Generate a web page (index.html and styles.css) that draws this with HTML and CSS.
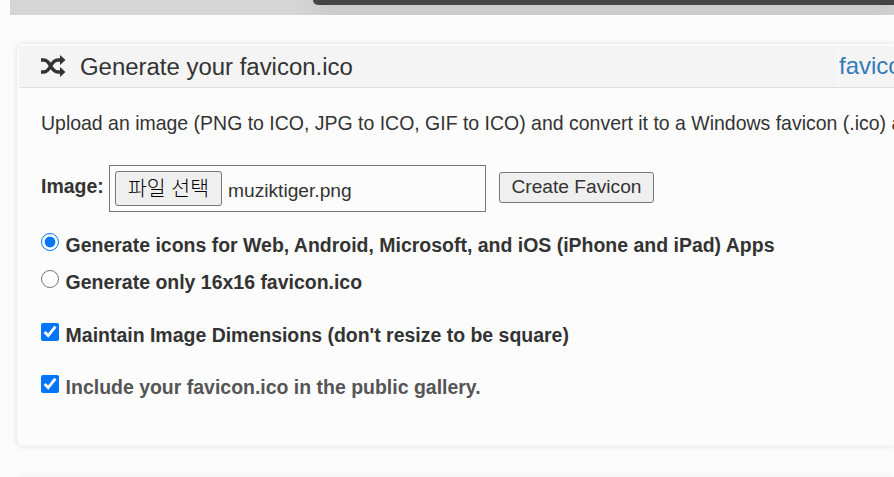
FILE: index.html
```html
<!DOCTYPE html>
<html lang="en">
<head>
<meta charset="utf-8">
<title>Favicon Generator</title>
<link rel="stylesheet" href="styles.css">
</head>
<body>
<div class="banner"><div class="banner-panel"></div></div>
<main class="panel">
  <header class="panel-head">
    <svg class="shuffle" viewBox="0 0 25 22" aria-hidden="true">
      <path d="M0 5H3C10 5 9 17 17 17H19M0 17H3C10 17 9 5 17 5H19" fill="none" stroke="#333" stroke-width="3.4"/>
      <path d="M19 0L24.5 5L19 10ZM19 12L24.5 17L19 22Z" fill="#333"/>
    </svg>
    <h1>Generate your favicon.ico</h1>
    <a class="head-link">favicon.ico</a>
  </header>
  <form class="panel-body">
    <p class="intro">Upload an image (PNG to ICO, JPG to ICO, GIF to ICO) and convert it to a Windows favicon (.ico) and</p>
    <div class="upload">
      <b class="upload-label">Image:</b>
      <div class="file"><button type="button" class="choose">파일 선택</button><span class="file-name">muziktiger.png</span></div>
      <button type="button" class="create">Create Favicon</button>
    </div>
    <label class="option web"><input type="radio" name="kind" checked><span>Generate icons for Web, Android, Microsoft, and iOS (iPhone and iPad) Apps</span></label>
    <label class="option"><input type="radio" name="kind"><span>Generate only 16x16 favicon.ico</span></label>
    <label class="option keep"><input type="checkbox" checked><span>Maintain Image Dimensions (don't resize to be square)</span></label>
    <label class="option gallery"><input type="checkbox" checked><span>Include your favicon.ico in the public gallery.</span></label>
  </form>
</main>
<section class="panel next"></section>
</body>
</html>
```
FILE: styles.css
```css
* { box-sizing: border-box; }
html { height: 477px; overflow: hidden; }
body {
  margin: 0;
  height: 477px;
  overflow: hidden;
  background: #fcfcfc;
  color: #333;
  font: 19.48px/28px "Liberation Sans", Arial, "Noto Sans CJK KR", sans-serif;
  white-space: nowrap;
}
.banner {
  height: 15px;
  margin-left: 10px;
  background: #d5d5d5;
  overflow: hidden;
}
.banner-panel {
  height: 5px;
  margin-left: 303px;
  border-radius: 0 0 0 7px;
  background: #454545;
  box-shadow: 0 6px 26px rgba(0, 0, 0, .3);
}
.panel {
  height: 402px;
  margin: 29px 0 0 17px;
  border: 2px solid #fafafa;
  border-right: 0;
  border-radius: 6px 0 0 6px;
  background: #fcfcfc;
  box-shadow: 0 0 6px rgba(0, 0, 0, .13);
}
.next { height: 2px; margin-top: 31px; border-bottom: 0; border-radius: 6px 0 0 0; }
.panel-head {
  display: flex;
  align-items: center;
  height: 42px;
  padding-left: 22px;
  border-bottom: 1px solid #e0e0e0;
  background: #f4f4f4;
  overflow: hidden;
}
.shuffle { flex: none; width: 25px; height: 22px; margin-top: -1px; }
h1 {
  width: 758px;
  margin: 0 0 0 14px;
  font-size: 23.95px;
  font-weight: 400;
  flex: none;
}
.head-link {
  height: 40px;
  border-left: 1px solid #fcfcfc;
  color: #337ab7;
  font-size: 24px;
  line-height: 38px;
}
.panel-body { padding: 21px 0 0 22px; }
.intro { margin: 0; overflow: hidden; }
.upload { display: flex; height: 47px; margin-top: 28px; }
.upload-label { width: 68px; line-height: 42px; }
.file {
  display: flex;
  width: 377px;
  padding: 5px;
  border: 1px solid #767676;
}
button {
  padding: 0;
  border: 1px solid #767676;
  border-radius: 3px;
  background: #efefef;
  color: #333;
  font: inherit;
}
.choose {
  width: 107px;
  height: 35px;
  color: #000;
  font-size: 20.5px;
  font-weight: 300;
  line-height: 33px;
}
.file-name { margin-left: 6px; font-size: 19.2px; line-height: 39px; }
.create {
  width: 155px;
  height: 31px;
  margin: 7px 0 0 13px;
  font-size: 19.2px;
  line-height: 26px;
  padding-bottom: 2px;
}
.option { display: flex; height: 28px; font-weight: 700; }
.option + .option { margin-top: 9px; }
.option.web { margin-top: 19px; }
.option.keep { margin-top: 25px; }
.option.gallery { margin-top: 24px; color: #555; }
input { width: 18px; height: 18px; margin: 2px 6.6px 0 0; flex: none; }
```
